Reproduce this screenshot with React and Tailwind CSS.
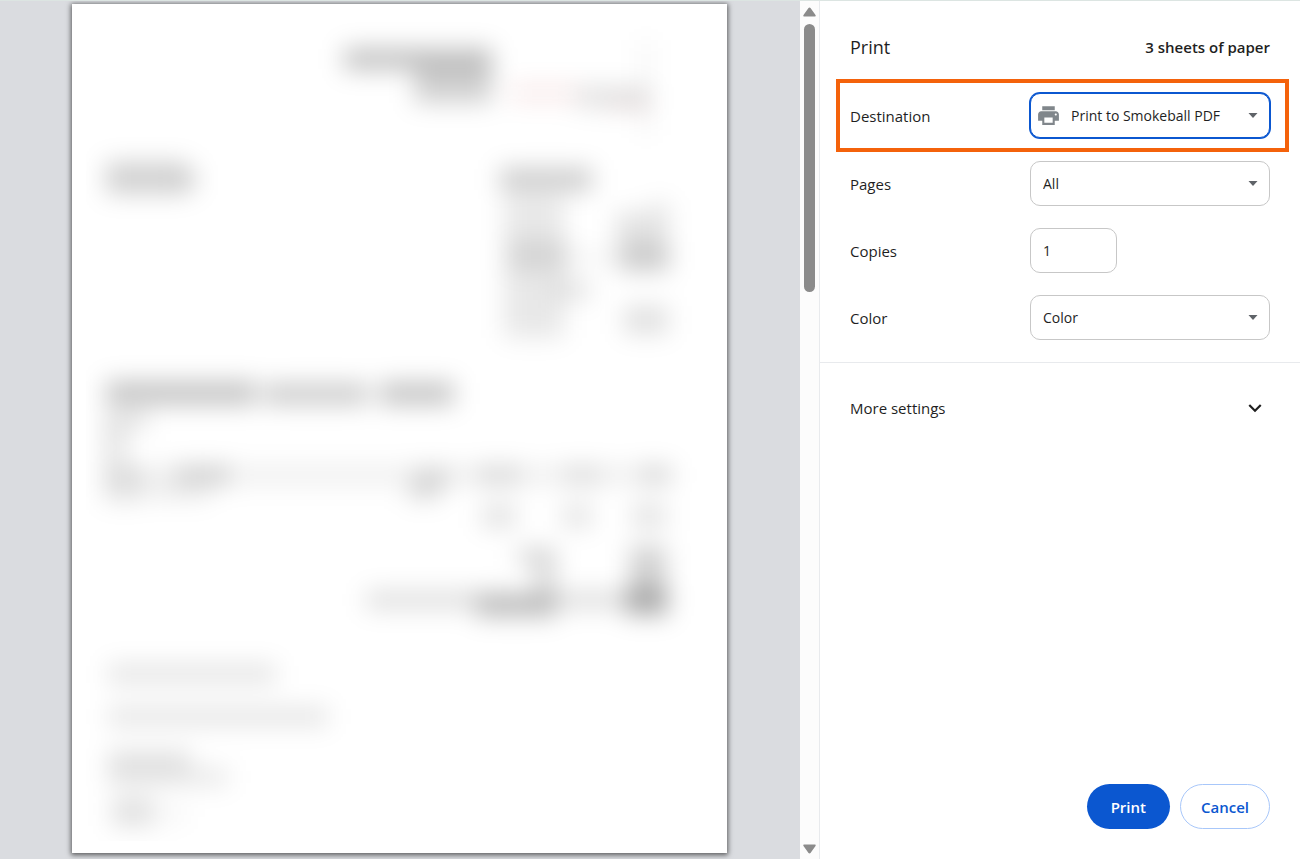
import React, { useState } from "react";
import { MdExpandMore, MdPrint } from "react-icons/md";

// [x, y, width, height, opacity, fill]
const smudges = [
  [344, 48, 148, 22, 0.24],
  [414, 66, 78, 37, 0.18],
  [510, 84, 66, 18, 0.08, "#b01010"],
  [576, 86, 72, 22, 0.11],
  [606, 100, 46, 10, 0.06, "#b01010"],
  [640, 40, 12, 95, 0.04],
  [106, 162, 82, 32, 0.18],
  [180, 172, 20, 16, 0.1],
  [500, 168, 92, 23, 0.2],
  [504, 196, 60, 142, 0.09],
  [508, 240, 60, 30, 0.09],
  [560, 252, 60, 10, 0.06],
  [555, 280, 36, 20, 0.1],
  [616, 212, 52, 60, 0.11],
  [624, 242, 46, 28, 0.11],
  [650, 200, 20, 16, 0.06],
  [624, 306, 44, 28, 0.12],
  [106, 381, 150, 24, 0.23],
  [264, 383, 104, 22, 0.2],
  [380, 382, 74, 23, 0.23],
  [104, 410, 44, 20, 0.1],
  [104, 426, 22, 40, 0.1],
  [104, 465, 570, 20, 0.06],
  [104, 468, 40, 34, 0.1],
  [176, 466, 54, 18, 0.15],
  [150, 486, 60, 14, 0.08],
  [414, 468, 36, 18, 0.11],
  [408, 482, 32, 18, 0.13],
  [478, 466, 42, 18, 0.11],
  [564, 466, 36, 18, 0.09],
  [640, 466, 30, 18, 0.11],
  [482, 504, 34, 24, 0.11],
  [562, 504, 30, 24, 0.1],
  [632, 504, 34, 24, 0.11],
  [518, 548, 38, 16, 0.16],
  [534, 562, 22, 34, 0.13],
  [630, 546, 36, 42, 0.18],
  [366, 591, 300, 18, 0.13],
  [476, 596, 80, 22, 0.2],
  [626, 586, 42, 30, 0.26],
  [108, 664, 168, 20, 0.1],
  [108, 707, 220, 19, 0.1],
  [108, 750, 82, 22, 0.11],
  [108, 768, 120, 18, 0.09],
  [112, 798, 42, 28, 0.12],
  [160, 806, 26, 16, 0.04],
];

function PreviewPage() {
  return (
    <svg
      viewBox="72 4 655 849"
      className="block h-auto w-full bg-white shadow-[0_1px_5px_1px_rgba(0,0,0,0.6)]"
      role="img"
      aria-label="Page 1"
    >
      <defs>
        <filter
          id="soften"
          filterUnits="userSpaceOnUse"
          colorInterpolationFilters="sRGB"
          x="72"
          y="4"
          width="655"
          height="849"
        >
          <feGaussianBlur stdDeviation="12" />
        </filter>
        <clipPath id="pageArea">
          <rect x="86" y="10" width="620" height="831" />
        </clipPath>
      </defs>
      <g clipPath="url(#pageArea)">
        <g filter="url(#soften)">
          {smudges.map(([x, y, width, height, opacity, fill], i) => (
            <rect
              key={i}
              x={x}
              y={y}
              width={width}
              height={height}
              fill={fill || "#000"}
              opacity={opacity}
            />
          ))}
        </g>
      </g>
    </svg>
  );
}

function ScrollArrow({ down }) {
  return (
    <svg
      viewBox="0 0 13 10"
      className={`w-[13px] shrink-0 ${down ? "rotate-180" : ""}`}
      fill="#8b8b8b"
    >
      <path d="M6.5.5c.4 0 .8.2 1 .5l5 7c.5.8.1 1.500-.8 1.500H1.300C.4 9.500 0 8.800.500 8l5-7c.2-.3.600-.5 1-.5z" />
    </svg>
  );
}

function Scrollbar() {
  return (
    <div className="flex w-5 shrink-0 flex-col items-center gap-[7px] border-r border-[#e8eaed] bg-[#fcfcfc] pt-1.5 pb-[5px]">
      <ScrollArrow />
      <div className="w-[11px] flex-1">
        <div className="h-[33%] rounded-full bg-[#8b8b8b]" />
      </div>
      <ScrollArrow down />
    </div>
  );
}

function SelectField({ id, options, icon, focused }) {
  const [value, setValue] = useState(options[0]);

  return (
    <div className="relative w-60">
      {icon && (
        <span className="pointer-events-none absolute inset-y-0 left-1.5 flex items-center">
          {icon}
        </span>
      )}
      <select
        id={id}
        value={value}
        onChange={(e) => setValue(e.target.value)}
        className={`block h-[45px] w-full appearance-none rounded-[10px] border bg-white pr-8 text-sm outline-none ${
          icon ? "pl-10" : "pl-3"
        } ${focused ? "border-[#0b57d0] ring-1 ring-[#0b57d0]" : "border-[#c7c7c7]"}`}
      >
        {options.map((option) => (
          <option key={option}>{option}</option>
        ))}
      </select>
      <span className="pointer-events-none absolute inset-y-0 right-3 flex items-center">
        <svg viewBox="0 0 10 5" className="w-2.5" fill="#5f6368">
          <path d="M.5 0h9L5 5z" />
        </svg>
      </span>
    </div>
  );
}

function SettingRow({ id, label, children }) {
  return (
    <div className="flex items-center justify-between">
      <label htmlFor={id}>{label}</label>
      <div className="flex w-60">{children}</div>
    </div>
  );
}

function App() {
  const [copies, setCopies] = useState("1");

  return (
    <div className="flex h-screen overflow-hidden border-t border-[#dce5e2] bg-white font-['Open_Sans',sans-serif] text-[15px] leading-5 text-[#1f1f1f]">
      <main className="min-w-0 flex-1 overflow-hidden bg-[#dadce0] pt-[3px] pr-[73px] pl-18">
        <PreviewPage />
      </main>
      <Scrollbar />

      <aside className="flex w-[480px] shrink-0 flex-col">
        <header className="flex items-center justify-between px-[30px] pt-[34px] pb-5">
          <h1 className="text-lg leading-6">Print</h1>
          <span className="font-semibold">3 sheets of paper</span>
        </header>

        <div className="mr-[11px] ml-4 border-4 border-[#f4620b] py-[10px] pr-[15px] pl-[10px]">
          <SettingRow id="destination" label="Destination">
            <SelectField
              id="destination"
              options={["Print to Smokeball PDF"]}
              icon={<MdPrint size={25} color="#80868b" />}
              focused
            />
          </SettingRow>
        </div>

        <div className="flex flex-col gap-[22px] border-b border-[#e8eaed] px-[30px] pt-[9px] pb-[22px]">
          <SettingRow id="pages" label="Pages">
            <SelectField id="pages" options={["All", "Odd pages only", "Even pages only", "Custom"]} />
          </SettingRow>
          <SettingRow id="copies" label="Copies">
            <input
              id="copies"
              type="text"
              inputMode="numeric"
              value={copies}
              onChange={(e) => setCopies(e.target.value)}
              className="h-[45px] w-[87px] rounded-[10px] border border-[#c7c7c7] px-3 text-sm outline-none"
            />
          </SettingRow>
          <SettingRow id="color" label="Color">
            <SelectField id="color" options={["Color", "Black and white"]} />
          </SettingRow>
        </div>

        <button
          type="button"
          className="flex items-center justify-between py-8 pr-8 pl-[30px] text-left"
        >
          More settings
          <MdExpandMore size={26} />
        </button>

        <footer className="mt-auto flex justify-end gap-[10px] px-[30px] pb-[30px] font-semibold">
          <button type="button" className="h-[45px] rounded-full bg-[#0b57d0] px-6 text-white">
            Print
          </button>
          <button
            type="button"
            className="h-[45px] rounded-full border border-[#a8c7fa] px-5 text-[#0b57d0]"
          >
            Cancel
          </button>
        </footer>
      </aside>
    </div>
  );
}

export default App;
